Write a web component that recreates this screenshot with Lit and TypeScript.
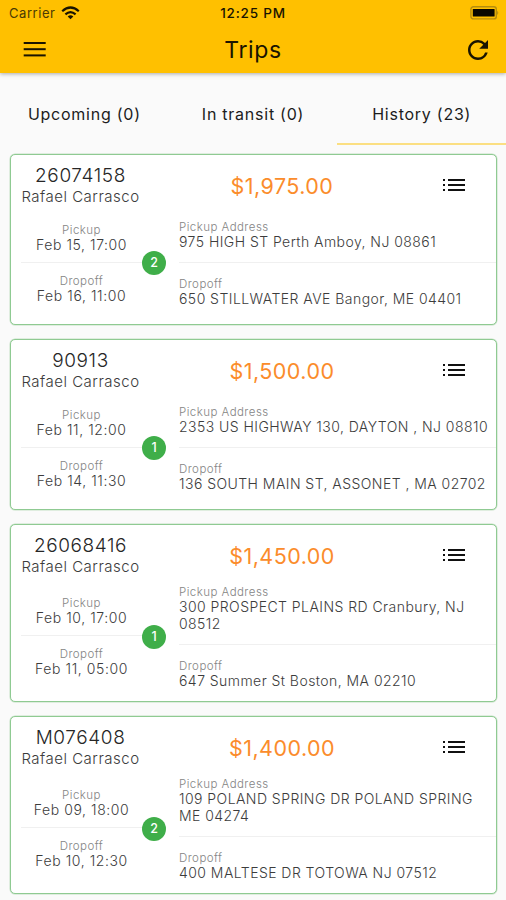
import { LitElement, html, css, svg } from "lit";
import { customElement, property } from "lit/decorators.js";

interface Trip {
  id: string;
  driver: string;
  price: string;
  stops: number;
  pickupTime: string;
  dropoffTime: string;
  pickup: string;
  dropoff: string;
}

const trips: Trip[] = [
  { id: "26074158", driver: "Rafael Carrasco", price: "$1,975.00", stops: 2, pickupTime: "Feb 15, 17:00", dropoffTime: "Feb 16, 11:00", pickup: "975 HIGH ST Perth Amboy, NJ 08861", dropoff: "650 STILLWATER AVE Bangor, ME 04401" },
  { id: "90913", driver: "Rafael Carrasco", price: "$1,500.00", stops: 1, pickupTime: "Feb 11, 12:00", dropoffTime: "Feb 14, 11:30", pickup: "2353 US HIGHWAY 130, DAYTON , NJ 08810", dropoff: "136 SOUTH MAIN ST, ASSONET , MA 02702" },
  { id: "26068416", driver: "Rafael Carrasco", price: "$1,450.00", stops: 1, pickupTime: "Feb 10, 17:00", dropoffTime: "Feb 11, 05:00", pickup: "300 PROSPECT PLAINS RD Cranbury, NJ\n08512", dropoff: "647 Summer St Boston, MA 02210" },
  { id: "M076408", driver: "Rafael Carrasco", price: "$1,400.00", stops: 2, pickupTime: "Feb 09, 18:00", dropoffTime: "Feb 10, 12:30", pickup: "109 POLAND SPRING DR POLAND SPRING\nME 04274", dropoff: "400 MALTESE DR TOTOWA NJ 07512" },
];

@customElement("trip-card")
export class TripCard extends LitElement {
  @property({ attribute: false }) trip!: Trip;

  static styles = css`
    :host { display: block; }
    .card {
      box-sizing: border-box;
      border: 1.5px solid #8fca92;
      border-radius: 5px;
      background: #fff;
      box-shadow: 0 0 0 0.5px rgba(143, 202, 146, 0.5);
      padding-bottom: 12px;
      color: #3c3c3c;
      font-weight: 300;
    }
    .head { display: grid; grid-template-columns: 139px 1fr 84px; height: 59px; }
    .who { text-align: center; padding-top: 9px; white-space: nowrap; }
    .id { font-size: 19px; line-height: 23px; letter-spacing: 0.6px; color: #262626; }
    .driver { font-size: 15px; line-height: 19px; letter-spacing: 0.5px; }
    .price {
      padding-top: 16.5px;
      padding-left: 2px;
      text-align: center;
      font-size: 21.5px;
      line-height: 28px;
      letter-spacing: 0.45px;
      font-weight: 400;
      color: #fb8c2b;
    }
    .menu { padding: 23px 0 0 29.5px; }
    .menu svg { display: block; }
    .body {
      display: grid;
      grid-template-columns: 121px 24px 1fr;
      align-items: center;
      min-height: 98px;
      padding-left: 10px;
    }
    .times { text-align: center; white-space: nowrap; }
    .label { color: #848484; font-size: 11.5px; line-height: 16px; height: 14px; letter-spacing: 0.45px; }
    .times .label { line-height: 15px; height: 13px; }
    .value { font-size: 14px; line-height: 17px; letter-spacing: 0.45px; white-space: pre; }
    .times .value { letter-spacing: 0.58px; }
    .rule { height: 1px; background: #f0f0f0; margin: 12px 0 13px; }
    .times .rule { margin: 9px 0 11px; }
    .badge {
      width: 24px;
      height: 24px;
      border-radius: 50%;
      background: #3fae49;
      color: #fff;
      font-size: 12.5px;
      font-weight: 500;
      line-height: 24px;
      text-align: center;
    }
    .places { padding-left: 13px; }
  `;

  render() {
    const t = this.trip;
    return html`
      <div class="card">
        <div class="head">
          <div class="who">
            <div class="id">${t.id}</div>
            <div class="driver">${t.driver}</div>
          </div>
          <div class="price">${t.price}</div>
          <div class="menu">
            <svg width="24" height="14" viewBox="0 0 24 14" fill="#111">
              ${[1, 6, 11].map((y) => svg`<rect x="1" y=${y} width="2" height="2" /><rect x="6" y=${y} width="17" height="2" />`)}
            </svg>
          </div>
        </div>
        <div class="body">
          <div class="times">
            <div class="label">Pickup</div>
            <div class="value">${t.pickupTime}</div>
            <div class="rule"></div>
            <div class="label">Dropoff</div>
            <div class="value">${t.dropoffTime}</div>
          </div>
          <div class="badge">${t.stops}</div>
          <div class="places">
            <div class="label">Pickup Address</div>
            <div class="value">${t.pickup}</div>
            <div class="rule"></div>
            <div class="label">Dropoff</div>
            <div class="value">${t.dropoff}</div>
          </div>
        </div>
      </div>
    `;
  }
}

@customElement("app-root")
export class AppRoot extends LitElement {
  static styles = css`
    :host {
      display: block;
      height: 900px;
      overflow: hidden;
      background: #fafafa;
      font-family: Inter, "Liberation Sans", sans-serif;
    }
    .top {
      height: 73px;
      background: #ffc000;
      box-shadow: 0 1px 4px rgba(0, 0, 0, 0.32);
      color: #1a1400;
    }
    .status {
      display: grid;
      grid-template-columns: 1fr auto 1fr;
      align-items: center;
      height: 26px;
      padding: 0 6px;
      font-size: 13px;
      letter-spacing: 0.55px;
    }
    .carrier { display: flex; align-items: center; gap: 6px; padding-left: 3px; color: #4a3a05; }
    .clock { font-size: 13.5px; font-weight: 450; letter-spacing: 0.8px; }
    .battery { justify-self: end; }
    .bar {
      display: grid;
      grid-template-columns: 30px 1fr 30px;
      align-items: center;
      height: 47px;
      padding: 0 13px 0 13px;
    }
    .lines { margin: -1px 0 0 10px; }
    .title { text-align: center; font-size: 23px; letter-spacing: 0.6px; font-weight: 400; }
    svg { display: block; }
    .tabs { display: grid; grid-template-columns: repeat(3, 1fr); height: 72px; }
    .tab {
      box-sizing: border-box;
      display: flex;
      align-items: center;
      justify-content: center;
      padding-top: 11px;
      border-bottom: 2px solid transparent;
      font-size: 16px;
      letter-spacing: 0.75px;
      color: #1c1c1c;
    }
    .tab.active { border-bottom-color: #fbdf82; }
    .list { display: flex; flex-direction: column; gap: 14px; padding: 9px 9px 0 10px; }
  `;

  render() {
    return html`
      <header class="top">
        <div class="status">
          <div class="carrier">
            <span>Carrier</span>
            <svg width="19" height="14" viewBox="0 0 19 14" fill="none" stroke="#1a1400" stroke-width="2.2">
              <path d="M1.2 5.3 Q9.5 -2.3 17.8 5.3" />
              <path d="M4.4 8.4 Q9.5 3.8 14.6 8.4" />
              <path d="M9.5 13.2 L6.7 10.4 Q9.5 8.2 12.3 10.4 Z" fill="#1a1400" stroke="none" />
            </svg>
          </div>
          <div class="clock">12:25 PM</div>
          <svg class="battery" width="30" height="14" viewBox="0 0 30 14">
            <rect x="0.9" y="0.7" width="25.4" height="12.2" rx="2.5" fill="none" stroke="#b58d0e" stroke-width="1.4" />
            <rect x="2.8" y="3" width="21.8" height="7.6" rx="0.6" fill="#0a0800" />
            <path d="M27.2 4.8 Q29.4 6.9 27.2 9 Z" fill="#b58d0e" />
          </svg>
        </div>
        <div class="bar">
          <svg class="lines" width="24" height="18" viewBox="0 0 24 18" fill="#1a1400">
            <rect x="0.7" y="2" width="22" height="2" />
            <rect x="0.7" y="8.2" width="22" height="2" />
            <rect x="0.7" y="14.4" width="22" height="2" />
          </svg>
          <div class="title">Trips</div>
          <svg width="30" height="30" viewBox="0 0 24 24" fill="#1a1400">
            <path d="M17.65 6.35A7.96 7.96 0 0 0 12 4c-4.42 0-7.99 3.58-7.99 8s3.57 8 7.99 8c3.73 0 6.84-2.55 7.73-6h-2.08A5.99 5.99 0 0 1 12 18c-3.31 0-6-2.69-6-6s2.69-6 6-6c1.66 0 3.14.69 4.22 1.78L13 11h7V4l-2.35 2.35z" />
          </svg>
        </div>
      </header>
      <nav class="tabs">
        <div class="tab">Upcoming (0)</div>
        <div class="tab">In transit (0)</div>
        <div class="tab active">History (23)</div>
      </nav>
      <main class="list">${trips.map((t) => html`<trip-card .trip=${t}></trip-card>`)}</main>
    `;
  }
}
